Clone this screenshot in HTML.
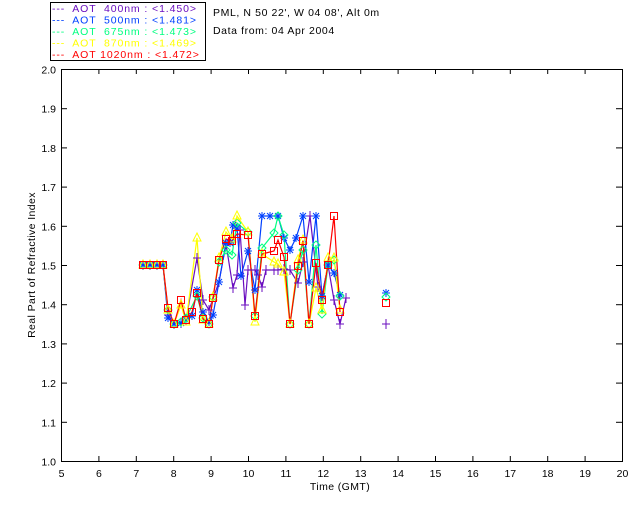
<!DOCTYPE html>
<html><head><meta charset="utf-8"><style>
html,body{margin:0;padding:0;background:#fff;}
body{width:640px;height:512px;overflow:hidden;position:relative;font-family:"Liberation Sans",sans-serif;}
</style></head><body>
<svg id="s" width="640" height="512" xmlns="http://www.w3.org/2000/svg" font-family="Liberation Sans, sans-serif" font-size="10.5">
<rect x="50.5" y="2.5" width="155" height="58" fill="none" stroke="#000"/>
<g font-size="10.5" letter-spacing="0.9">
<text x="52" y="12" fill="#6a0dbf" xml:space="preserve">---  AOT  400nm : &lt;1.450&gt;</text>
<text x="52" y="23.5" fill="#0040ff" xml:space="preserve">---  AOT  500nm : &lt;1.481&gt;</text>
<text x="52" y="35" fill="#00ff80" xml:space="preserve">---  AOT  675nm : &lt;1.473&gt;</text>
<text x="52" y="46.5" fill="#ffff00" xml:space="preserve">---  AOT  870nm : &lt;1.469&gt;</text>
<text x="52" y="58" fill="#ff0000" xml:space="preserve">---  AOT 1020nm : &lt;1.472&gt;</text>
</g>
<g font-size="10.5" letter-spacing="0.6">
<text x="213" y="16" fill="#000">PML, N 50 22', W 04 08', Alt 0m</text>
<text x="213" y="34" fill="#000">Data from: 04 Apr 2004</text>
</g>
<path d="M61.5 69V461.5H622.5V69.5H61.5" fill="none" stroke="#000"/>
<g id="ticks" stroke="#000"></g>
<g id="labs" fill="#000"></g>
<text x="340" y="490" text-anchor="middle" letter-spacing="0.4">Time (GMT)</text>
<text transform="translate(35,265) rotate(-90)" text-anchor="middle" letter-spacing="0.4">Real Part of Refractive Index</text>
<g id="data"></g>
</svg>
<script>
var ns="http://www.w3.org/2000/svg";
function el(p,t,a){var e=document.createElementNS(ns,t);for(var k in a)e.setAttribute(k,a[k]);p.appendChild(e);return e;}
var T=document.getElementById('ticks'),L=document.getElementById('labs');
for(var i=0;i<=15;i++){var x=61.5+i*37.4;el(T,'line',{x1:x,x2:x,y1:461,y2:456});el(T,'line',{x1:x,x2:x,y1:69,y2:74});var t=el(L,'text',{x:x,y:477,'text-anchor':'middle'});t.textContent=5+i;}
for(var j=0;j<=10;j++){var y=461.5-j*39.2;el(T,'line',{x1:61,x2:67,y1:y,y2:y});el(T,'line',{x1:622,x2:616,y1:y,y2:y});var t=el(L,'text',{x:56,y:y+4,'text-anchor':'end'});t.textContent=(1+j/10).toFixed(1);}
var D=document.getElementById('data');
function P(s){return s.trim().split(/\s+/).map(function(q){return q.split(',').map(Number);});}
var base="143,265 150,265 157,265 163,265 ";
var S=[
{c:'#6a0dbf',m:'plus',p:P(base+"168,315 174,324 181,323 186,320 197,258 203,300 209,310 219,282 226,244 233,288 237,275 240,230 245,305 248,270 255,270 258,275 262,287 266,270 274,270 278,270 284,269 290,270 298,283 303,262 310,216 318,287 322,296 328,265 334,300 340,324 346,298"),x:[386,324]},
{c:'#0040ff',m:'ast',p:P(base+"168,318 174,324 181,323 186,320 192,316 197,290 203,312 209,322 213,315 219,282 226,243 230,243 233,225 237,228 241,276 248,251 255,290 262,216 270,216 278,216 284,238 290,250 296,238 303,216 309,282 316,216 322,296 328,265 334,273 340,295"),x:[386,293]},
{c:'#00ff80',m:'dia',p:P(base+"168,310 174,324 181,322 186,318 197,296 203,318 209,324 213,297 219,262 226,250 232,255 237,223 248,232 255,316 262,248 274,233 278,216 284,235 290,324 298,270 303,250 309,324 316,245 322,314 328,265 334,260 340,296"),x:[386,297]},
{c:'#ffff00',m:'tri',p:P(base+"168,310 174,324 181,305 186,322 197,238 203,320 209,324 213,297 219,258 226,232 232,239 237,216 248,232 255,322 262,254 274,262 278,264 284,272 290,324 298,260 303,240 309,324 316,288 322,310 328,258 334,258 340,310"),x:null},
{c:'#ff0000',m:'sq',p:P(base+"168,308 174,324 181,300 186,320 192,312 197,293 203,319 209,324 213,298 219,260 226,239 232,241 237,234 248,235 255,316 262,254 274,251 278,240 284,257 290,324 298,266 303,241 309,324 316,263 322,300 328,265 334,216 340,312"),x:[386,303]}
];
function mk(s,x,y){var c=s.c,a={stroke:c,fill:'none','stroke-width':1};
 if(s.m=='plus'){el(D,'path',Object.assign({d:'M'+(x-4)+' '+y+'h8M'+x+' '+(y-5)+'v10'},a));}
 else if(s.m=='ast'){el(D,'path',Object.assign({d:'M'+(x-4)+' '+y+'h8M'+x+' '+(y-4)+'v8M'+(x-3)+' '+(y-3)+'l6 6M'+(x+3)+' '+(y-3)+'l-6 6'},a));}
 else if(s.m=='dia'){el(D,'path',Object.assign({d:'M'+x+' '+(y-4)+'l4 4l-4 4l-4 -4z'},a));}
 else if(s.m=='tri'){el(D,'path',Object.assign({d:'M'+x+' '+(y-5)+'l4 8h-8z'},a));}
 else {el(D,'rect',Object.assign({x:x-3.5,y:y-3.5,width:7,height:7},a));}}
S.forEach(function(s){el(D,'polyline',{points:s.p.map(function(q){return q.join(',')}).join(' '),fill:'none',stroke:s.c,'stroke-width':1.2});});
S.forEach(function(s){s.p.forEach(function(q){mk(s,q[0],q[1]);});if(s.x)mk(s,s.x[0],s.x[1]);});
</script>
</body></html>
